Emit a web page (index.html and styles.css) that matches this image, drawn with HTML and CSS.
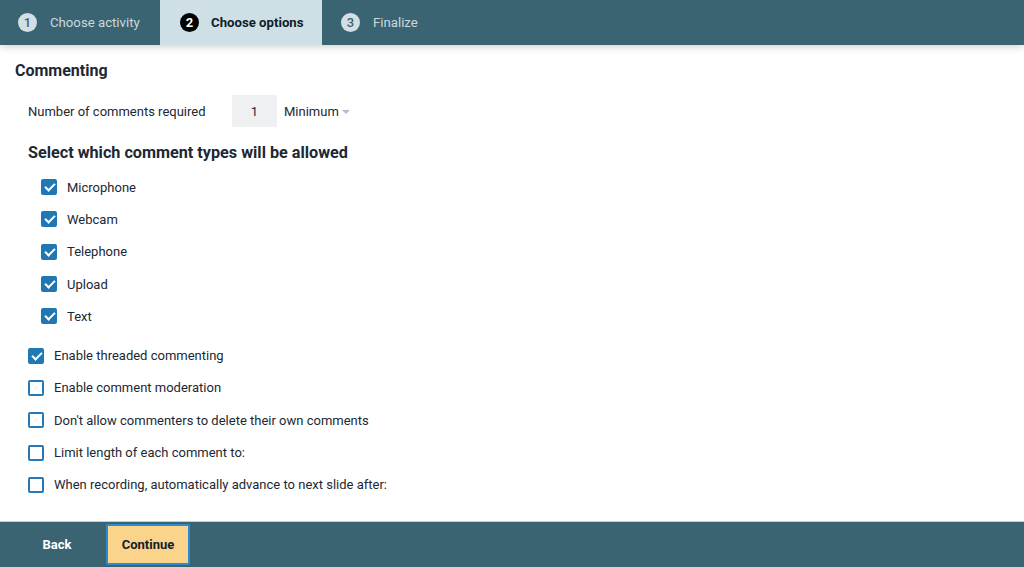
FILE: index.html
```html
<!DOCTYPE html>
<html>
<head>
<meta charset="utf-8">
<link rel="stylesheet" href="styles.css">
</head>
<body>
<div class="page">
  <header class="steps">
    <div class="step"><span class="num">1</span><span class="label">Choose activity</span></div>
    <div class="step active"><span class="num">2</span><span class="label">Choose options</span></div>
    <div class="step"><span class="num">3</span><span class="label">Finalize</span></div>
  </header>
  <main class="content">
    <h2 class="title">Commenting</h2>
    <div class="required-row">
      <span class="req-label">Number of comments required</span>
      <span class="num-input">1</span>
      <span class="select">Minimum<span class="caret"></span></span>
    </div>
    <h3 class="subtitle">Select which comment types will be allowed</h3>
    <ul class="opts types">
      <li><span class="cb checked"></span>Microphone</li>
      <li><span class="cb checked"></span>Webcam</li>
      <li><span class="cb checked"></span>Telephone</li>
      <li><span class="cb checked"></span>Upload</li>
      <li><span class="cb checked"></span>Text</li>
    </ul>
    <ul class="opts settings">
      <li><span class="cb checked"></span>Enable threaded commenting</li>
      <li><span class="cb"></span>Enable comment moderation</li>
      <li><span class="cb"></span>Don't allow commenters to delete their own comments</li>
      <li><span class="cb"></span>Limit length of each comment to:</li>
      <li><span class="cb"></span>When recording, automatically advance to next slide after:</li>
    </ul>
  </main>
  <footer class="footer">
    <button class="btn back">Back</button>
    <button class="btn continue">Continue</button>
  </footer>
</div>
</body>
</html>
```
FILE: styles.css
```css
* { box-sizing: border-box; }
html, body { margin: 0; padding: 0; }
body {
  font-family: Roboto, "Liberation Sans", Arial, sans-serif;
  color: #1c2833;
  background: #fff;
}
.page {
  width: 1024px;
  height: 567px;
  display: flex;
  flex-direction: column;
  overflow: hidden;
}
.steps {
  height: 45px;
  background: #3a6472;
  display: flex;
  box-shadow: 0 2px 8px rgba(0,0,0,0.18);
  position: relative;
  z-index: 1;
}
.step {
  display: flex;
  align-items: center;
  font-size: 13.2px;
  color: #cbd9df;
}
.step:nth-child(1) { width: 160px; padding-left: 18px; }
.step:nth-child(2) { width: 162px; padding-left: 20px; }
.step:nth-child(3) { padding-left: 19px; }
.step .num {
  width: 19px;
  height: 19px;
  border-radius: 50%;
  background: #d3dfe4;
  color: #3a6472;
  font-size: 13px;
  font-weight: 500;
  display: flex;
  align-items: center;
  justify-content: center;
  margin-right: 13px;
}
.step.active {
  background: #cfdfe6;
  color: #111d26;
  font-weight: 700;
}
.step.active .num {
  background: #000;
  color: #fff;
  font-weight: 700;
  margin-right: 12px;
}
.content {
  flex: 1;
  padding: 0 15px;
}
.title {
  margin: 16px 0 0;
  font-size: 16px;
  font-weight: 700;
  line-height: 20px;
}
.required-row {
  display: flex;
  align-items: center;
  margin: 14px 0 0 13px;
  font-size: 13px;
  height: 32px;
}
.req-label { width: 204px; }
.num-input {
  width: 45px;
  height: 32px;
  background: #eef0f2;
  display: flex;
  align-items: center;
  justify-content: center;
}
.select {
  margin-left: 7px;
  display: flex;
  align-items: center;
}
.caret {
  width: 0;
  height: 0;
  border-left: 4px solid transparent;
  border-right: 4px solid transparent;
  border-top: 4px solid #b8bec4;
  margin-left: 3px;
  margin-top: 2px;
}
.subtitle {
  margin: 16px 0 0 13px;
  font-size: 16.2px;
  font-weight: 700;
  line-height: 20px;
}
.opts {
  list-style: none;
  margin: 0;
  padding: 0;
  font-size: 13px;
}
.opts li {
  display: flex;
  align-items: center;
  height: 32.3px;
}
.types { margin: 8px 0 0 26px; }
.settings { margin: 7px 0 0 13px; }
.cb {
  width: 16px;
  height: 16px;
  border: 2px solid #2679b6;
  border-radius: 2px;
  margin-right: 10px;
  background: #fff;
  position: relative;
  flex: none;
}
.cb.checked {
  background: #1f77b4;
  border-color: #1f77b4;
}
.cb.checked::after {
  content: "";
  position: absolute;
  left: 4px;
  top: 0px;
  width: 4px;
  height: 8px;
  border-right: 2.2px solid #fff;
  border-bottom: 2.2px solid #fff;
  transform: rotate(45deg);
}
.footer {
  height: 46px;
  background: #3a6472;
  border-top: 1px solid #c4ccd0;
  display: flex;
  align-items: center;
  padding-left: 22px;
}
.btn {
  font-family: inherit;
  font-size: 13px;
  font-weight: 700;
  border: none;
  cursor: pointer;
}
.back {
  background: transparent;
  color: #fff;
  width: 70px;
  height: 40px;
  padding: 0;
}
.continue {
  margin-left: 14px;
  width: 84px;
  height: 41px;
  background: #fad48a;
  color: #14212b;
  border: 2px solid #2a8bd4;
  border-radius: 2px;
}
```
